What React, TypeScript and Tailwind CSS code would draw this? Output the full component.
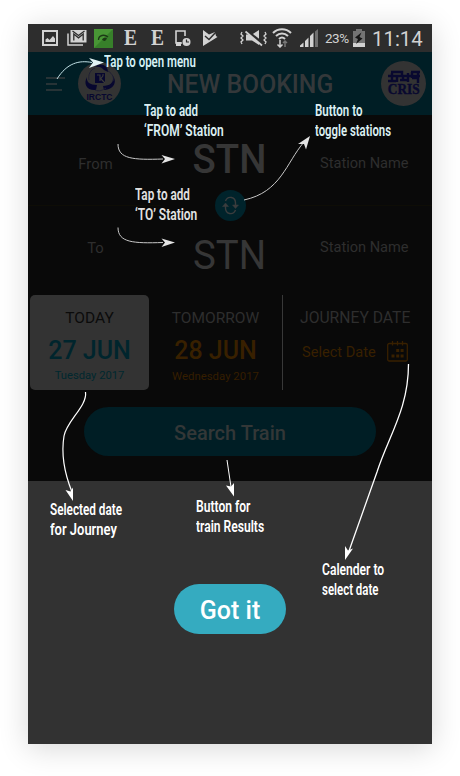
import React from "react";

type NoteProps = { className: string; lines: { text: string; sx: number }[] };

// Condensed hand-lettered hint, one entry per line.
function Note({ className, lines }: NoteProps) {
  return (
    <div className={`absolute font-['Roboto',sans-serif] text-[16px] font-semibold leading-5 whitespace-nowrap ${className}`}>
      {lines.map((l) => (
        <div key={l.text} className="w-max origin-left" style={{ transform: `scaleX(${l.sx})` }}>
          {l.text}
        </div>
      ))}
    </div>
  );
}

function StatusBar() {
  return (
    <div className="flex h-7 items-center bg-[#2d2d2d] pl-[14px] text-[#d2d2d2]">
      <svg className="h-4 w-4 shrink-0" viewBox="0 0 16 16" fill="none" stroke="currentColor" strokeWidth="2">
        <path d="M1 1h14v14H1z" />
        <path d="M3.500 12V9.500L5.500 8l2 2 3.500-4 2 2.500V12z" fill="currentColor" stroke="none" />
      </svg>
      <svg className="ml-[9px] h-4 w-5 shrink-0" viewBox="0 0 20 16" fill="none" stroke="currentColor" strokeWidth="1.500">
        <path d="M1 3.500V15h15" />
        <path d="M3.500 0h16v12.500h-16z" fill="currentColor" stroke="none" />
        <path d="M6.800 10.500V4l4.700 3.800L16.200 4v6.500M5.500 1l6 4.500 6-4.500" stroke="#2d2d2d" strokeWidth="1.300" />
      </svg>
      <svg className="ml-[7px] h-[19px] w-[19px] shrink-0" viewBox="0 0 19 19">
        <path d="M0 0h19v19H0z" fill="#37802a" />
        <path d="M0 0h19L0 19z" fill="#489635" />
        <path d="M4.500 11c0-5 6-6 9.500-3" fill="none" stroke="#1c3916" strokeWidth="1.300" />
        <path d="M8 10.500c1-2 3-2 5-1.500-1 3-3 4-5 1.500z" fill="#1c3916" />
      </svg>
      <span className="ml-[11px] w-[14px] origin-left scale-x-85 font-['Liberation_Serif',serif] text-[23px] leading-5 font-bold">E</span>
      <span className="ml-[13px] w-[14px] origin-left scale-x-85 font-['Liberation_Serif',serif] text-[23px] leading-5 font-bold">E</span>
      <svg className="ml-[10px] h-4 w-4 shrink-0" viewBox="0 0 16 16" fill="none" stroke="currentColor" strokeWidth="1.600">
        <path d="M10 6V1H1v12h6" />
        <path d="M1 12h5v4H1z" fill="currentColor" stroke="none" />
        <circle cx="11.500" cy="12" r="4" fill="currentColor" stroke="none" />
        <path d="M11.500 9.500V12h2.500" stroke="#2d2d2d" strokeWidth="1.200" />
      </svg>
      <svg className="ml-[12px] h-4 w-[15px] shrink-0" viewBox="0 0 15 16">
        <path d="M0 0l6 4.500L12 2l1 4 1.500 1L0 16z" fill="currentColor" />
        <path d="M2 6l4 3.500L13 2" fill="none" stroke="#2d2d2d" strokeWidth="1.500" />
      </svg>
      <svg className="ml-[22px] h-[18px] w-[27px] shrink-0" viewBox="0 0 27 18" fill="none" stroke="currentColor">
        <path d="M2 3l-1 2 2 2-2 2 2 2-2 2 1 2M25 3l1 2-2 2 2 2-2 2 2 2-1 2" strokeWidth="1.300" />
        <path d="M6 5.500h6l7-4.500v15l-7-4.500H6z" fill="currentColor" stroke="none" />
        <path d="M7 2l16 13" stroke="#2d2d2d" strokeWidth="3" />
        <path d="M5.500 2.500l16.500 14" strokeWidth="1.700" />
      </svg>
      <svg className="ml-[5px] h-5 w-5 shrink-0" viewBox="0 0 20 20" fill="none" stroke="currentColor" strokeWidth="2">
        <path d="M1 5c5-5 13-5 18 0M4 8c3.500-3.500 8.500-3.500 12 0M7 11c2-2 4-2 6 0" />
        <path d="M8 12v7M5.500 16.500L8 19l2.500-2.500" strokeWidth="1.500" />
        <path d="M13 19v-6M11 15l2-2 2 2" stroke="#777" strokeWidth="1.500" />
      </svg>
      <svg className="ml-[8px] h-[18px] w-[18px] shrink-0" viewBox="0 0 18 18" fill="currentColor">
        <path d="M0 18v-1.500l3.500-3V18zM5 18v-6l3.500-3.500V18zM10 18V7l3.500-3.500V18z" />
        <path d="M15 18V2.500L18 0v18z" fill="#707070" />
      </svg>
      <span className="ml-[7px] w-[26px] font-['Roboto',sans-serif] text-[13.500px] tracking-[-0.500px]">23%</span>
      <svg className="ml-[2px] h-[18px] w-3 shrink-0" viewBox="0 0 12 18">
        <path d="M0 2h3V0h6v2h3v16H0z" fill="#747474" />
        <path d="M0 14h12v4H0z" fill="#d2d2d2" />
        <path d="M8.500 3.500L2 8.500l3 1.500-2 5 6.500-5.500-3-1.500z" fill="#161616" />
      </svg>
      <span className="ml-[7px] origin-left scale-x-97 pt-[2px] font-['Roboto',sans-serif] text-[21px] leading-7">11:14</span>
    </div>
  );
}

function Header() {
  return (
    <div className="flex h-[63px] items-center bg-[#001e25]">
      <svg className="ml-[18px] h-[14px] w-[19px]" viewBox="0 0 19 14" stroke="#343b3d" strokeWidth="1.700">
        <path d="M0 1h19M0 7h11M0 13h16" />
      </svg>
      <div className="ml-[13px] flex h-[43px] w-[43px] flex-col items-center rounded-full bg-[#333]">
        <svg className="h-[32px] w-[34px]" viewBox="0 0 34 32">
          <path d="M12 5c5-5 13-2 13 5l-4-2c-2-3-6-4-9-3z" fill="#07072f" />
          <path d="M4 15c-1 5 3 8 10 8l-1 5C4 29 0 22 4 15z" fill="#07072f" />
          <path d="M30 14c5 7-1 14-9 14l-1-4c8 0 11-4 10-10z" fill="#07072f" />
          <path d="M12 6C7 8 5 13 6 18M25 9c5 3 6 7 5 10M12 28c4 2 8 0 11-2" fill="none" stroke="#202034" />
          <path d="M12 11h10v10H12z" fill="#07072f" />
          <path d="M14 13h3v6M20 12c1 3-3 4-2 5l4 4" fill="none" stroke="#393939" strokeWidth="1.200" />
        </svg>
        <span className="-mt-[1px] font-['Liberation_Sans',sans-serif] text-[8.500px] leading-[9px] font-bold text-[#07072f]">IRCTC</span>
      </div>
      <h1 className="ml-[46px] w-[167px] origin-left scale-x-99 pt-[2px] font-['Roboto',sans-serif] text-[25px] font-medium whitespace-nowrap text-[#34383a]">NEW BOOKING</h1>
      <div className="ml-[47px] flex h-[45px] w-[45px] flex-col items-center rounded-full bg-[#333]">
        <svg className="mt-[9px] h-[13px] w-8" viewBox="0 0 32 13" fill="none" stroke="#09092f" strokeWidth="2.400">
          <path d="M3 2h11v4M0 6h32M4 3v9M0 11h8M9 6v6M12 10h9M15 6v5M20 3v9M24 2v6M24 8h7M30 2v11M23 2h9" />
        </svg>
        <span className="origin-center scale-x-95 font-['Liberation_Serif',serif] text-[14px] leading-[13px] font-bold text-[#09092f] [-webkit-text-stroke:0.4px_#09092f]">CRIS</span>
      </div>
    </div>
  );
}

function StationRow({ label, pad, shift, stn }: { label: string; pad: string; shift: string; stn: string }) {
  return (
    <div className={`flex items-center font-['Roboto',sans-serif] text-[#2e2e2e] ${pad}`}>
      <span className={`w-[135px] text-center text-[14.800px] ${shift}`}>{label}</span>
      <span className={`w-[133px] scale-x-96 text-center text-[40px] leading-[48px] text-[#363636] ${stn}`}>STN</span>
      <span className={`ml-[24px] text-[14.600px] whitespace-nowrap ${shift}`}>Station Name</span>
    </div>
  );
}

function Dates() {
  return (
    <div className="flex h-[95px] pl-[2px] font-['Roboto',sans-serif]">
      <div className="flex w-[119px] flex-col items-center rounded-[5px] bg-[#333] pt-[13px]">
        <span className="text-[15.500px] leading-5 text-[#0b0b0b]">TODAY</span>
        <span className="mt-[8px] text-[25px] leading-[30px] font-medium text-[#00252d]">27 JUN</span>
        <span className="mt-[2px] text-[11.200px] leading-4 text-[#00282f]">Tuesday 2017</span>
      </div>
      <div className="flex w-[133px] flex-col items-center pt-[13px]">
        <span className="text-[15.500px] leading-5 text-[#2e2e2e]">TOMORROW</span>
        <span className="mt-[8px] text-[25px] leading-[30px] font-medium text-[#382000]">28 JUN</span>
        <span className="mt-[2px] text-[11.400px] leading-4 text-[#351e00]">Wednesday 2017</span>
      </div>
      <div className="w-px bg-[#383838]" />
      <div className="flex flex-1 flex-col pt-[13px] pl-[17px] text-[#382000]">
        <span className="text-[15.700px] leading-5 whitespace-nowrap text-[#2e2e2e]">JOURNEY DATE</span>
        <div className="mt-[13px] flex items-center pl-[2px]">
          <span className="w-[74px] text-[14.600px] leading-5 whitespace-nowrap">Select Date</span>
          <svg className="ml-[11px] h-[21px] w-[21px]" viewBox="0 0 21 21" fill="none" stroke="currentColor" strokeWidth="1.300">
            <rect x="0.700" y="2.500" width="19.600" height="17.500" rx="1.500" />
            <path d="M5.500 0v4.500M10.500 0v4.500M15.500 0v4.500" />
            <path d="M9.200 9.500h3M13.600 9.500h3M4.500 15h3M9.200 15h3M13.600 15h3" strokeWidth="3" />
          </svg>
        </div>
      </div>
    </div>
  );
}

function Overlay() {
  return (
    <div className="absolute inset-0 text-white">
      <svg className="absolute inset-0 h-[720px] w-[404px]" viewBox="28 24 404 720" fill="none" stroke="currentColor" strokeWidth="1.200">
        <g stroke="#c1e0e5" fill="#e2f3f5">
          <path d="M57 79C67 63 79 60 92 62.500" fill="none" strokeWidth="1" />
          <path d="M104 62.500l-15-4.500 4 4.500-4 5.500z" stroke="none" />
        </g>
        <g stroke="#c8c8c8" strokeWidth="1">
          <path d="M118 144c0 15 15 16 45 15" />
          <path d="M118 227.500c0 15 15 16 45 15" />
          <path d="M244 200c37-8 42-37 60-58" />
        </g>
        <path d="M85.500 392c2 14-19 29-21.500 44-3 18 0 36 8 56" strokeWidth="1.200" />
        <path d="M227 460l4 27" strokeWidth="1" />
        <path d="M408.500 364c0 45-20 72-31.500 108L349 551" strokeWidth="1.300" />
        <g fill="#e4e4e4" stroke="none">
          <path d="M175 159l-13.500-4 3.500 4-3.500 4.500z" />
          <path d="M175 242.500l-13.500-4 3.500 4-3.500 4.500z" />
          <path d="M310 136l-12 8 6 0 2 5.500z" />
        </g>
        <g fill="currentColor" stroke="none">
          <path d="M73 501l-7.500-11 5 1.500 2.500-4z" />
          <path d="M234 496.500l-8-11 5 1 3-3.500z" />
          <path d="M345 560l0-14 3 4.500 5-2z" />
        </g>
      </svg>
      <Note className="left-[76px] top-[28px] text-[#d5f0f4]" lines={[{ text: "Tap to open menu", sx: 0.715 }]} />
      <Note className="left-[116px] top-[77px] text-[#dceff2]" lines={[{ text: "Tap to add", sx: 0.72 }, { text: "‘FROM’ Station", sx: 0.75 }]} />
      <Note className="left-[287px] top-[77px] text-[#dceff2]" lines={[{ text: "Button to", sx: 0.72 }, { text: "toggle stations", sx: 0.71 }]} />
      <Note className="left-[107px] top-[161px] text-[#e2e2e2]" lines={[{ text: "Tap to add", sx: 0.73 }, { text: "‘TO’ Station", sx: 0.75 }]} />
      <Note className="left-[22px] top-[476px]" lines={[{ text: "Selected date", sx: 0.735 }, { text: "for Journey", sx: 0.81 }]} />
      <Note className="left-[168px] top-[473px]" lines={[{ text: "Button for", sx: 0.755 }, { text: "train Results", sx: 0.755 }]} />
      <Note className="left-[294px] top-[536px]" lines={[{ text: "Calender to", sx: 0.755 }, { text: "select date", sx: 0.715 }]} />
    </div>
  );
}

export default function App() {
  return (
    <div className="h-[776px] w-[460px] bg-white px-7 pt-6">
      <div className="relative h-[720px] w-[404px] bg-[#323232] shadow-[0_4px_28px_rgba(0,0,0,0.16)]">
        <StatusBar />
        <Header />
        <div className="h-[366px] bg-[#090909]">
          <div className="relative h-[180px]">
            <StationRow label="From" pad="pt-[21px] pb-[21px]" shift="pt-[8px]" stn="font-medium" />
            <div className="flex h-px justify-between">
              <div className="w-[133px] bg-[#0e0d06]" />
              <div className="w-[132px] bg-[#0e0d06]" />
            </div>
            <StationRow label="To" pad="pt-[26px]" shift="pb-[16px]" stn="font-normal" />
            <div className="absolute left-[187px] top-[75px] flex h-[31px] w-[31px] items-center justify-center rounded-full bg-[#00232b]">
              <svg className="h-[19px] w-[17px]" viewBox="0 0 17 19" fill="none" stroke="#3b3d3e" strokeWidth="1.400">
                <path d="M3.500 5C6-1 13.500 1 13.500 7v3M13.500 14C11 20 3.500 18 3.500 12V9" />
                <path d="M10.500 9h6l-3 3.500zM.5 10.500h6l-3-3.500z" fill="#3b3d3e" strokeWidth=".5" />
              </svg>
            </div>
          </div>
          <Dates />
          <div className="mt-[17px] ml-[56px] flex h-[49px] w-[292px] items-center justify-center rounded-full bg-[#001e25] pt-[3px] font-['Roboto',sans-serif] text-[20px] font-medium text-[#333737]">
            Search Train
          </div>
        </div>
        <Overlay />
        <div className="flex justify-center pt-[103px]">
          <button className="relative h-[50px] w-[112px] rounded-full bg-[#35abc0] pt-[3px] font-['Roboto',sans-serif] text-[25px] font-medium text-white">Got it</button>
        </div>
      </div>
    </div>
  );
}
